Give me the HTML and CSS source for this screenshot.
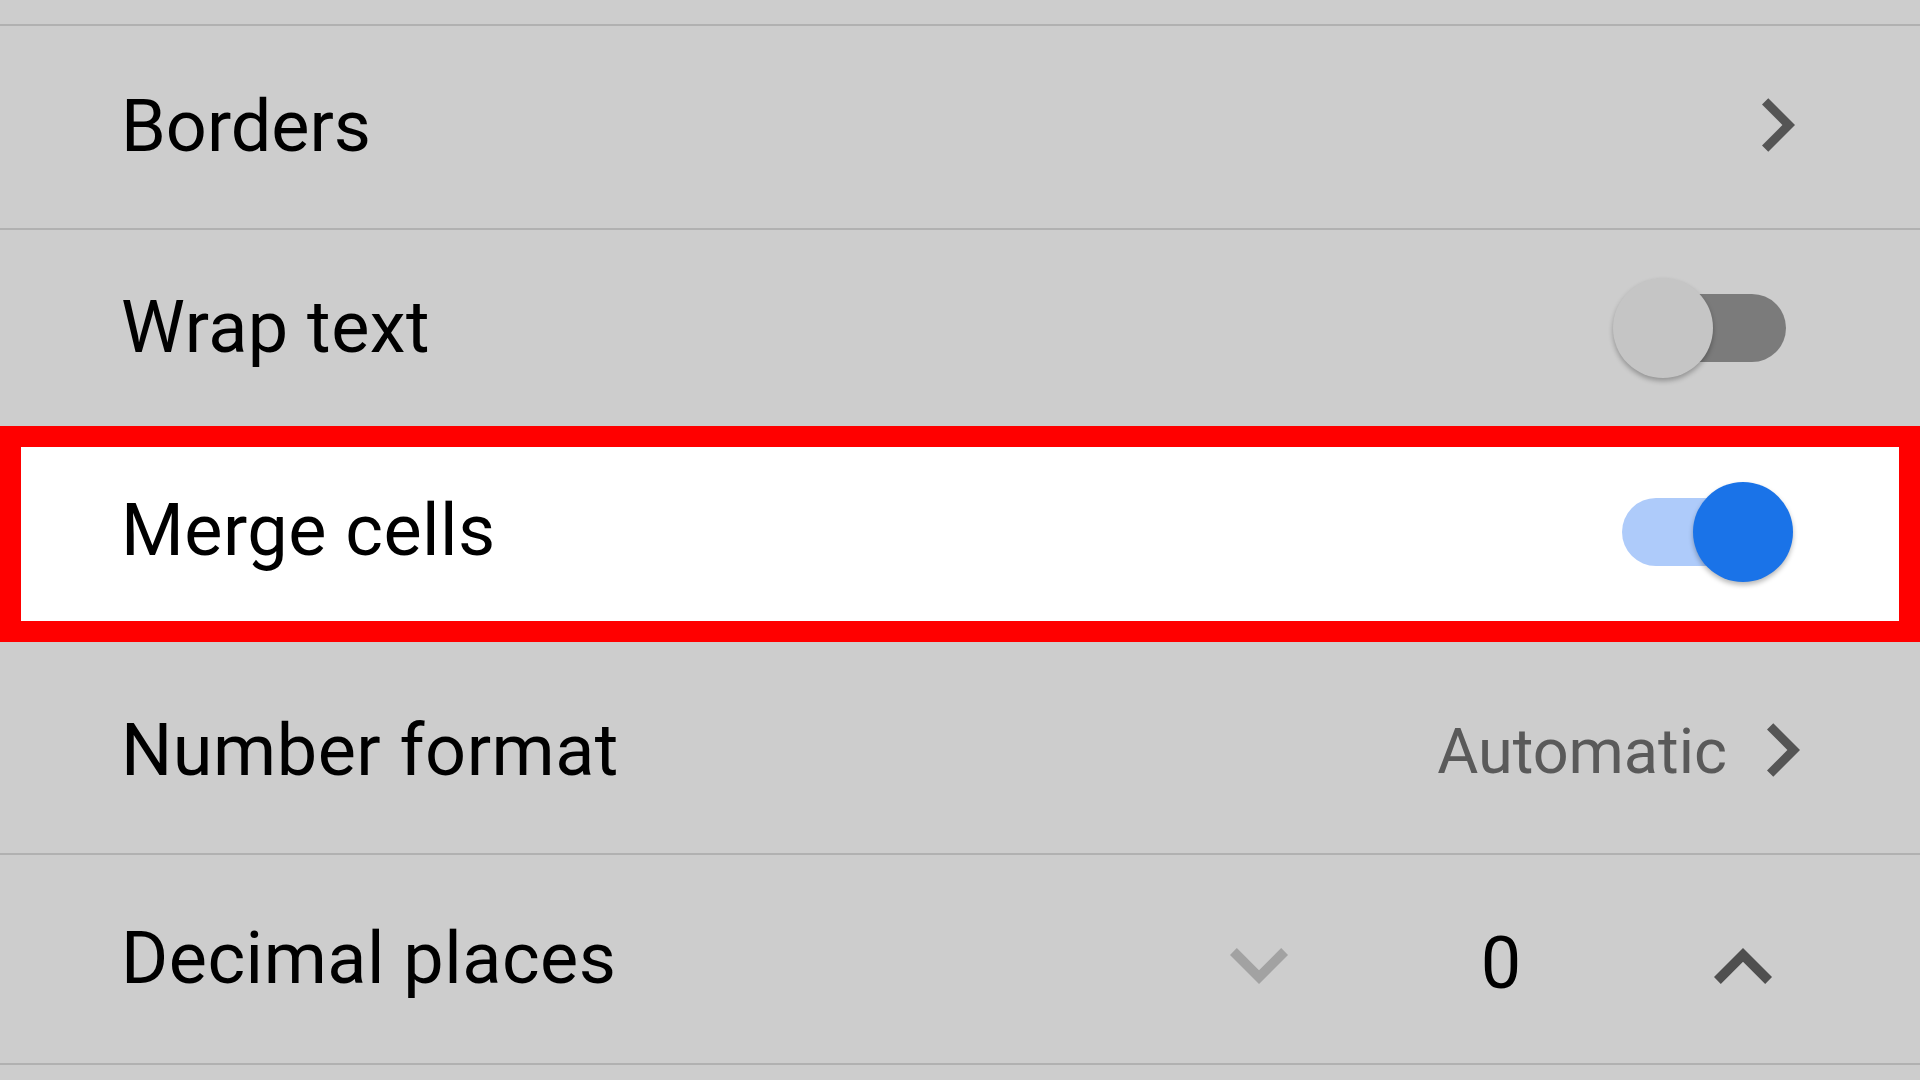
FILE: index.html
```html
<!DOCTYPE html>
<html lang="en">
<head>
<meta charset="utf-8">
<title>Cell formatting</title>
<link rel="stylesheet" href="styles.css">
</head>
<body>
<div class="sheet">
  <div class="top"></div>

  <div class="row row-borders">
    <span class="label">Borders</span>
    <svg class="chev-right" viewBox="8.59 6 7.41 12" aria-hidden="true"><path d="M10 6L8.59 7.41 13.17 12l-4.58 4.59L10 18l6-6z"/></svg>
  </div>

  <div class="row row-wrap">
    <span class="label">Wrap text</span>
    <span class="switch switch-off"><span class="track"></span><span class="knob"></span></span>
  </div>

  <div class="row row-merge">
    <span class="label">Merge cells</span>
    <span class="switch switch-on"><span class="track"></span><span class="knob"></span></span>
  </div>

  <div class="row row-number">
    <span class="label">Number format</span>
    <span class="value-group">
      <span class="value">Automatic</span>
      <svg class="chev-right" viewBox="8.59 6 7.41 12" aria-hidden="true"><path d="M10 6L8.59 7.41 13.17 12l-4.58 4.59L10 18l6-6z"/></svg>
    </span>
  </div>

  <div class="row row-decimal">
    <span class="label">Decimal places</span>
    <span class="stepper">
      <svg class="chev-down" viewBox="6 8.59 12 7.41" aria-hidden="true"><path d="M16.59 8.59L12 13.17 7.41 8.59 6 10l6 6 6-6z"/></svg>
      <span class="count">0</span>
      <svg class="chev-up" viewBox="6 8 12 7.41" aria-hidden="true"><path d="M12 8l-6 6 1.41 1.41L12 10.83l4.59 4.58L18 14z"/></svg>
    </span>
  </div>
</div>
</body>
</html>
```

FILE: styles.css
```css
* {
  box-sizing: border-box;
}

html, body {
  margin: 0;
  padding: 0;
  background: #cdcdcd;
}

body {
  font-family: Roboto, "Noto Sans", "Liberation Sans", sans-serif;
  color: #000;
  width: 1920px;
  height: 1080px;
  overflow: hidden;
}

.sheet {
  display: flex;
  flex-direction: column;
}

.top {
  height: 26px;
  border-bottom: 2px solid #b1b1b1;
}

.row {
  display: flex;
  align-items: center;
  padding: 0 125px 0 121px;
  border-bottom: 2px solid #b1b1b1;
}

.label {
  font-size: 72px;
  line-height: 1.172;
  letter-spacing: 0.5px;
  white-space: nowrap;
}

.row-borders {
  height: 204px;
}

.row-borders .label {
  letter-spacing: 0;
}

.row-wrap {
  height: 196px;
  border-bottom: none;
}

.row-merge {
  height: 216px;
  padding-bottom: 5px;
  background: #fff;
  border-bottom: none;
  box-shadow: inset 0 0 0 21px #ff0000;
}

.row-number {
  height: 213px;
  padding-top: 8px;
}

.row-decimal {
  height: 210px;
}

/* chevrons */
.chev-right {
  margin-left: auto;
  width: 33px;
  height: 54px;
  fill: #555555;
  flex: none;
}

.row-borders .chev-right {
  margin-top: -4px;
}

/* value + chevron */
.value-group {
  margin-left: auto;
  margin-right: -5px;
  display: flex;
  align-items: center;
}

.value {
  font-size: 63px;
  line-height: 1.172;
  color: #5a5a5a;
  margin-right: 40px;
}

.value-group .chev-right {
  margin-left: 0;
  margin-top: -2px;
}

/* switch */
.switch {
  position: relative;
  margin-left: auto;
  margin-right: 9px;
  width: 164px;
  height: 100px;
  flex: none;
}

.track {
  position: absolute;
  left: 0;
  top: 16px;
  width: 164px;
  height: 68px;
  border-radius: 34px;
}

.knob {
  position: absolute;
  top: 0;
  width: 100px;
  height: 100px;
  border-radius: 50%;
  box-shadow: 0 3px 5px rgba(0, 0, 0, 0.28);
}

.switch-off .track {
  background: #7b7b7b;
}

.switch-off .knob {
  left: -9px;
  background: #c5c5c5;
}

.switch-on .track {
  background: #aecbfa;
}

.switch-on .knob {
  left: 71px;
  background: #1a73e8;
}

/* stepper */
.stepper {
  margin-left: auto;
  margin-right: 23px;
  margin-top: 14px;
  display: flex;
  align-items: center;
}

.chev-down,
.chev-up {
  width: 58px;
  height: 36px;
  flex: none;
}

.chev-down {
  fill: #a2a2a2;
}

.chev-up {
  fill: #4f4f4f;
}

.count {
  width: 200px;
  margin: 0 113px;
  text-align: center;
  font-size: 72px;
  line-height: 1.172;
  margin-top: -3px;
}
```
